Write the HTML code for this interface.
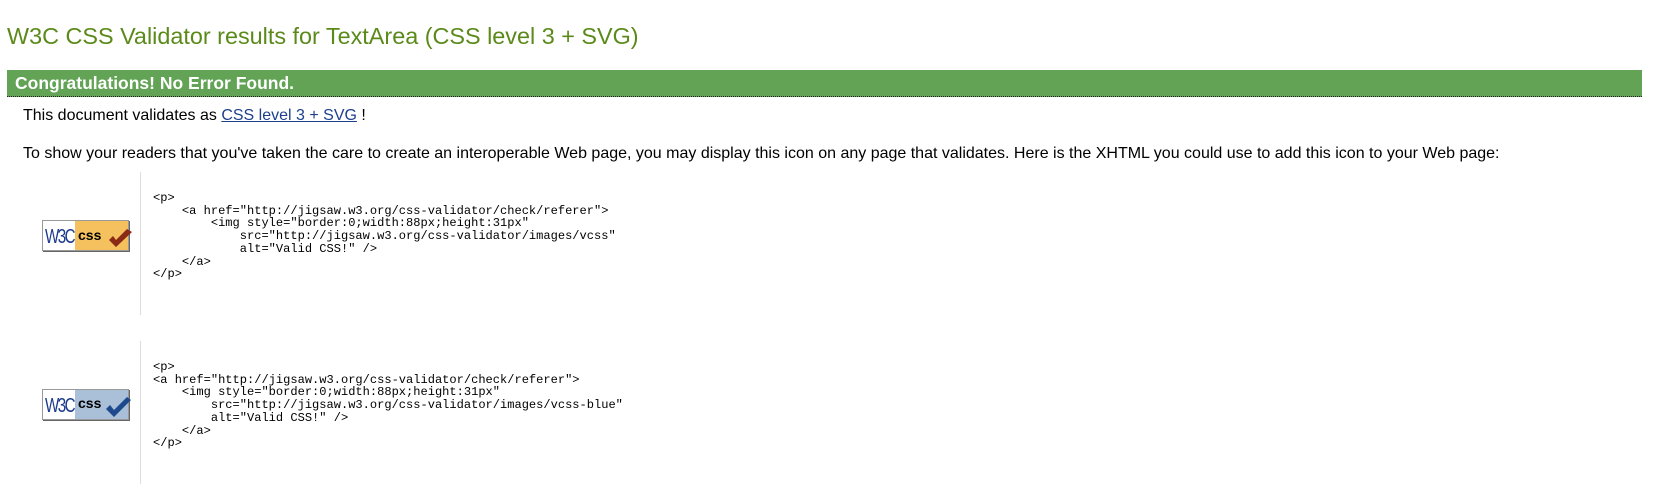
<!DOCTYPE html>
<html><head><meta charset="utf-8"><style>
body{margin:0;background:#fff;font-family:"Liberation Sans",Arial,sans-serif;color:#000;width:1659px;height:484px;overflow:hidden;position:relative}
h2{position:absolute;left:7px;top:23px;margin:0;font-weight:normal;font-size:23.4px;color:#5b8a1a;white-space:nowrap}
.bar{position:absolute;left:7px;top:70px;width:1635px;height:26px;background:#62a356;border-bottom:1px dotted #222}
.bar span{position:absolute;left:8px;top:3px;color:#fff;font-weight:bold;font-size:17.5px}
p{position:absolute;margin:0;font-size:16px;white-space:nowrap}
a{color:#1d3f8c}
.vl{position:absolute;left:140px;width:1px;background:#ddd}
pre{position:absolute;left:153px;margin:0;font-family:"Liberation Mono","DejaVu Sans Mono",monospace;font-size:12.05px;line-height:12.7px;color:#000}
.badge{position:absolute;left:42px}
</style></head><body>
<h2>W3C CSS Validator results for TextArea (CSS level 3 + SVG)</h2>
<div class="bar"><span>Congratulations! No Error Found.</span></div>
<p style="left:23px;top:107px">This document validates as <a href="#">CSS level 3 + SVG</a> !</p>
<p style="left:23px;top:145px">To show your readers that you've taken the care to create an interoperable Web page, you may display this icon on any page that validates. Here is the XHTML you could use to add this icon to your Web page:</p>
<div class="vl" style="top:172px;height:143px"></div>
<div class="vl" style="top:341px;height:143px"></div>
<svg class="badge" style="top:220px" width="92" height="33" viewBox="0 0 92 33">
<rect x="0.5" y="0.5" width="86" height="30" fill="#fff" stroke="#999"/>
<rect x="33" y="1" width="53" height="29" fill="#f4c15e"/>
<line x1="1" y1="31.5" x2="88" y2="31.5" stroke="#666"/><line x1="87.5" y1="1" x2="87.5" y2="32" stroke="#666"/>
<text x="3" y="23" font-family="Liberation Sans Narrow,Liberation Sans,sans-serif" font-size="20" fill="#1b3a8c" letter-spacing="-2" textLength="29" lengthAdjust="spacingAndGlyphs">W3C</text>
<text x="36" y="20" font-family="Liberation Sans,sans-serif" font-weight="bold" font-size="14" fill="#000">css</text>
<path d="M67 20 L74 27 L90 12 L85 9 L74 20 L71 16 Z" fill="#8a2a15"/>
</svg>
<svg class="badge" style="top:389px" width="92" height="33" viewBox="0 0 92 33">
<rect x="0.5" y="0.5" width="86" height="30" fill="#fff" stroke="#999"/>
<rect x="33" y="1" width="53" height="29" fill="#aabfd8"/>
<line x1="1" y1="31.5" x2="88" y2="31.5" stroke="#666"/><line x1="87.5" y1="1" x2="87.5" y2="32" stroke="#666"/>
<text x="3" y="23" font-family="Liberation Sans Narrow,Liberation Sans,sans-serif" font-size="20" fill="#1b3a8c" letter-spacing="-2" textLength="29" lengthAdjust="spacingAndGlyphs">W3C</text>
<text x="36" y="19" font-family="Liberation Sans,sans-serif" font-weight="bold" font-size="14" fill="#000">css</text>
<path d="M64 20 L72 28 L89 11 L85 8 L72 21 L68 16 Z" fill="#1d4a8c"/>
</svg>
<pre style="top:192px">&lt;p&gt;
    &lt;a href="http://jigsaw.w3.org/css-validator/check/referer"&gt;
        &lt;img style="border:0;width:88px;height:31px"
            src="http://jigsaw.w3.org/css-validator/images/vcss"
            alt="Valid CSS!" /&gt;
    &lt;/a&gt;
&lt;/p&gt;</pre>
<pre style="top:361px">&lt;p&gt;
&lt;a href="http://jigsaw.w3.org/css-validator/check/referer"&gt;
    &lt;img style="border:0;width:88px;height:31px"
        src="http://jigsaw.w3.org/css-validator/images/vcss-blue"
        alt="Valid CSS!" /&gt;
    &lt;/a&gt;
&lt;/p&gt;</pre>
</body></html>
